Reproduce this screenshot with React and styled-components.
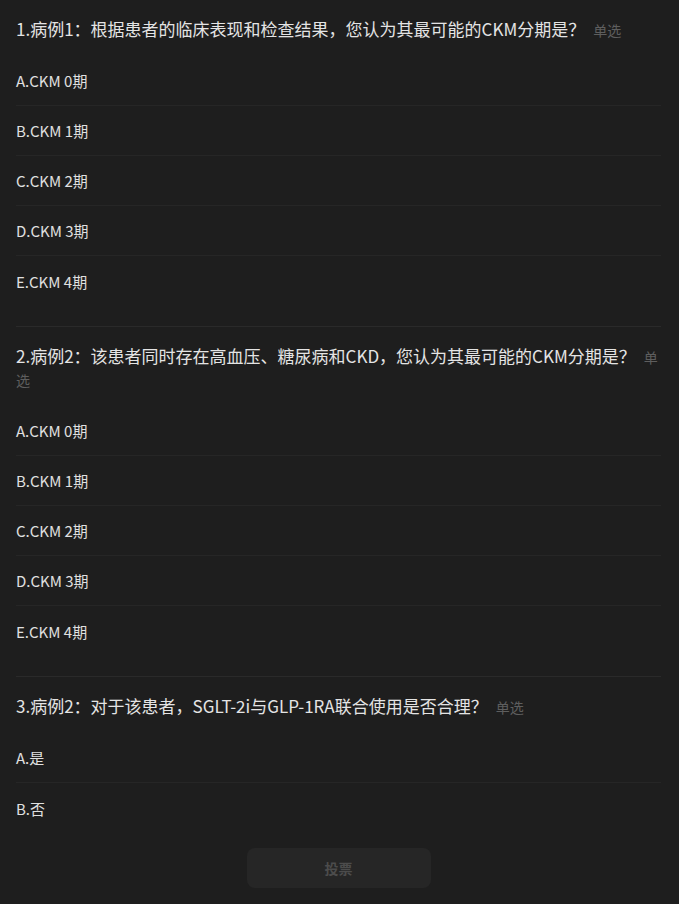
import React from "react";
import styled, { createGlobalStyle } from "styled-components";

const GlobalStyle = createGlobalStyle`
  html, body {
    margin: 0;
    padding: 0;
    background: #1e1e1e;
  }
  body {
    font-family: "Microsoft YaHei", "Noto Sans CJK SC", "Noto Sans", sans-serif;
  }
`;

const Page = styled.div`
  min-height: 904px;
  box-sizing: border-box;
  padding: 0 18px 0 16px;
  background: #1e1e1e;
  color: #e2e2e2;
`;

const Question = styled.section`
  padding: 18px 0 ${(p) => (p.$last ? "0" : "20px")};
  border-bottom: ${(p) => (p.$last ? "none" : "1px solid #2a2a2a")};
`;

const Title = styled.div`
  font-size: 17px;
  line-height: 22px;
  color: #e4e4e4;
  margin-bottom: 15px;
`;

const Tag = styled.span`
  font-size: 14px;
  color: #5e5e5e;
  margin-left: 8px;
`;

const Options = styled.ul`
  list-style: none;
  margin: 0;
  padding: 0;
`;

const Option = styled.li`
  height: 50px;
  display: flex;
  align-items: center;
  font-size: 15px;
  color: #e0e0e0;
  border-bottom: 1px solid #262626;
  box-sizing: border-box;
  &:last-child {
    border-bottom: none;
  }
`;

const Footer = styled.div`
  display: flex;
  justify-content: center;
  padding: 15px 0;
`;

const VoteButton = styled.button`
  width: 184px;
  height: 40px;
  border: none;
  border-radius: 8px;
  background: #262626;
  color: #4c4c4c;
  font-family: inherit;
  font-size: 14px;
  font-weight: bold;
  cursor: not-allowed;
`;

const questions = [
  {
    title: "1.病例1：根据患者的临床表现和检查结果，您认为其最可能的CKM分期是？",
    options: ["A.CKM 0期", "B.CKM 1期", "C.CKM 2期", "D.CKM 3期", "E.CKM 4期"],
  },
  {
    title: "2.病例2：该患者同时存在高血压、糖尿病和CKD，您认为其最可能的CKM分期是？",
    options: ["A.CKM 0期", "B.CKM 1期", "C.CKM 2期", "D.CKM 3期", "E.CKM 4期"],
  },
  {
    title: "3.病例2：对于该患者，SGLT-2i与GLP-1RA联合使用是否合理？",
    options: ["A.是", "B.否"],
  },
];

const App = () => {
  return (
    <>
      <GlobalStyle />
      <Page>
        {questions.map((q, i) => (
          <Question key={i} $last={i === questions.length - 1}>
            <Title>
              {q.title}
              <Tag>单选</Tag>
            </Title>
            <Options>
              {q.options.map((o) => (
                <Option key={o}>{o}</Option>
              ))}
            </Options>
          </Question>
        ))}
        <Footer>
          <VoteButton disabled>投票</VoteButton>
        </Footer>
      </Page>
    </>
  );
};

export default App;
